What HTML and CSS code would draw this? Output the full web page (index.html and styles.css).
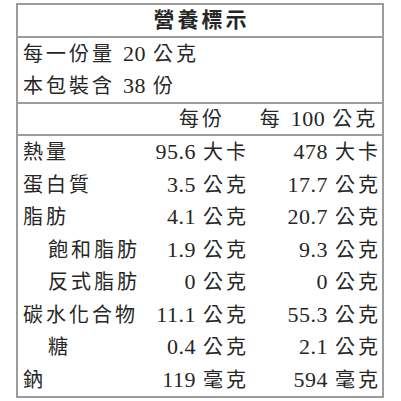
FILE: index.html
```html
<!DOCTYPE html>
<html lang="zh-Hant">
<head>
<meta charset="utf-8">
<link rel="stylesheet" href="styles.css">
</head>
<body>
<div class="label">
  <div class="title">營養標示</div>
  <div class="serving">
    <div class="line">每一份量 <span class="n">20</span> 公克</div>
    <div class="line">本包裝含 <span class="n">38</span> 份</div>
  </div>
  <div class="row head">
    <div class="name"></div>
    <div class="per c">每份</div>
    <div class="per100 c">每 <span class="n">100</span> 公克</div>
  </div>
  <div class="body">
    <div class="row"><div class="name">熱量</div><div class="per"><span class="n">95.6</span> 大卡</div><div class="per100"><span class="n">478</span> 大卡</div></div>
    <div class="row"><div class="name">蛋白質</div><div class="per"><span class="n">3.5</span> 公克</div><div class="per100"><span class="n">17.7</span> 公克</div></div>
    <div class="row"><div class="name">脂肪</div><div class="per"><span class="n">4.1</span> 公克</div><div class="per100"><span class="n">20.7</span> 公克</div></div>
    <div class="row"><div class="name sub">飽和脂肪</div><div class="per"><span class="n">1.9</span> 公克</div><div class="per100"><span class="n">9.3</span> 公克</div></div>
    <div class="row"><div class="name sub">反式脂肪</div><div class="per"><span class="n">0</span> 公克</div><div class="per100"><span class="n">0</span> 公克</div></div>
    <div class="row"><div class="name">碳水化合物</div><div class="per"><span class="n">11.1</span> 公克</div><div class="per100"><span class="n">55.3</span> 公克</div></div>
    <div class="row"><div class="name sub">糖</div><div class="per"><span class="n">0.4</span> 公克</div><div class="per100"><span class="n">2.1</span> 公克</div></div>
    <div class="row"><div class="name">鈉</div><div class="per"><span class="n">119</span> 毫克</div><div class="per100"><span class="n">594</span> 毫克</div></div>
  </div>
</div>
</body>
</html>
```

FILE: styles.css
```css
html, body {
  margin: 0;
  padding: 0;
  background: #ffffff;
}
body {
  font-family: "Liberation Serif", "Noto Sans CJK TC", serif;
  color: #262626;
  font-size: 20px;
  letter-spacing: 3px;
}
.n {
  font-size: 22px;
  letter-spacing: 0.5px;
  margin-right: -1px;
}
.label {
  margin: 3px 0 0 16px;
  width: 364px;
  border: 2px solid #9c9c9c;
}
.title {
  height: 31px;
  line-height: 31px;
  text-align: center;
  font-weight: bold;
  font-size: 21px;
  border-bottom: 2px solid #9c9c9c;
  padding-left: 3px;
}
.serving {
  height: 64px;
  border-bottom: 2px solid #9c9c9c;
  padding-left: 5px;
}
.line {
  height: 32px;
  line-height: 32px;
}
.row {
  display: grid;
  grid-template-columns: 130px 105px 1fr;
  height: 32.5px;
  line-height: 32.5px;
}
.row.head {
  height: 30px;
  line-height: 30px;
  border-bottom: 2px solid #9c9c9c;
}
.name {
  padding-left: 5px;
  white-space: nowrap;
}
.name.sub {
  padding-left: 30px;
}
.per {
  text-align: right;
  padding-right: 4px;
  white-space: nowrap;
}
.per100 {
  text-align: right;
  padding-right: 1px;
  white-space: nowrap;
}
.c {
  text-align: center;
  padding: 0 0 0 3px;
}
```
